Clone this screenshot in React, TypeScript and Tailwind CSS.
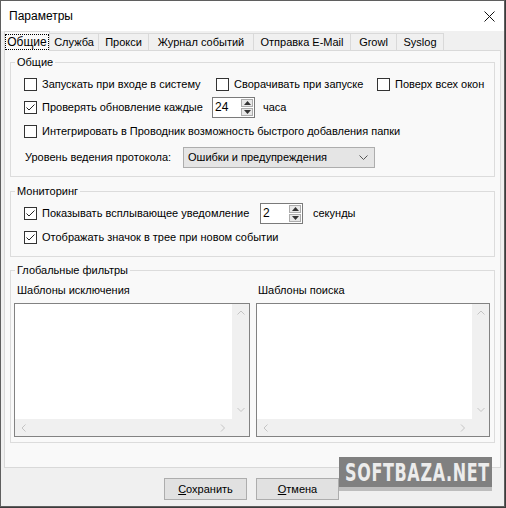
import React from "react";

function Check({ checked = false }: { checked?: boolean }) {
  return (
    <span className="flex h-[13px] w-[13px] shrink-0 items-center justify-center border border-[#333] bg-white">
      {checked ? (
        <svg width="11" height="11" viewBox="0 0 11 11">
          <polyline points="1.5,5.5 4,8 9.5,2.5" fill="none" stroke="#222" strokeWidth="1" />
        </svg>
      ) : null}
    </span>
  );
}

function CheckItem({ checked, label, className = "" }: { checked?: boolean; label: string; className?: string }) {
  return (
    <div className={`flex shrink-0 items-center gap-[5px] ${className}`}>
      <Check checked={checked} />
      <span className="whitespace-nowrap">{label}</span>
    </div>
  );
}

function Spin({ value }: { value: string }) {
  return (
    <div className="flex h-[21px] w-[43px] shrink-0 items-stretch border border-[#7a7a7a] bg-white">
      <span className="flex-1 pl-[2px] text-[12px] leading-[19px]">{value}</span>
      <div className="my-[1px] mr-[1px] flex w-[12px] flex-col gap-[1px]">
        <div className="flex flex-1 items-center justify-center border border-[#acacac] bg-[#e8e8e8]">
          <svg width="7" height="4" viewBox="0 0 7 4">
            <polygon points="0,4 3.5,0 7,4" fill="#333" />
          </svg>
        </div>
        <div className="flex flex-1 items-center justify-center border border-[#acacac] bg-[#e8e8e8]">
          <svg width="7" height="4" viewBox="0 0 7 4">
            <polygon points="0,0 3.5,4 7,0" fill="#333" />
          </svg>
        </div>
      </div>
    </div>
  );
}

function Group({ title, className = "", children }: { title: string; className?: string; children: React.ReactNode }) {
  return (
    <div className={`relative border border-[#dcdcdc] ${className}`}>
      <span className="absolute left-[4px] top-[-9px] bg-[#f9f9f9] px-[2px] leading-[16px]">{title}</span>
      {children}
    </div>
  );
}

function Chevron({ dir }: { dir: "up" | "down" | "left" | "right" }) {
  const pts = {
    up: "0.5,4.5 4,1 7.5,4.5",
    down: "0.5,1 4,4.5 7.5,1",
    left: "4.5,0.5 1,4 4.5,7.5",
    right: "1,0.5 4.5,4 1,7.5",
  }[dir];
  const vertical = dir === "up" || dir === "down";
  return (
    <svg width={vertical ? 8 : 6} height={vertical ? 6 : 8} viewBox={vertical ? "0 0 8 6" : "0 0 6 8"}>
      <polyline points={pts} fill="none" stroke="#c4c4c4" strokeWidth="1" />
    </svg>
  );
}

function ListBox() {
  return (
    <div className="flex h-[134px] flex-col border border-[#828282] bg-white">
      <div className="flex flex-1">
        <div className="flex-1 bg-white" />
        <div className="flex w-[17px] flex-col items-center justify-between bg-[#f0f0f0] py-[6px]">
          <Chevron dir="up" />
          <Chevron dir="down" />
        </div>
      </div>
      <div className="flex h-[17px]">
        <div className="flex flex-1 items-center justify-between bg-[#f0f0f0] px-[6px]">
          <Chevron dir="left" />
          <Chevron dir="right" />
        </div>
        <div className="w-[17px] bg-[#f0f0f0]" />
      </div>
    </div>
  );
}

const tabs = ["Общие", "Служба", "Прокси", "Журнал событий", "Отправка E-Mail", "Growl", "Syslog"];
const tabWidths = ["w-[46px]", "w-[49px]", "w-[50px]", "w-[105px]", "w-[97px]", "w-[46px]", "w-[47px]"];

export default function App() {
  return (
    <div className="relative h-[508px] w-[506px] overflow-hidden bg-[#3c3c3c] font-['Liberation_Sans',Arial,sans-serif] text-[11px] text-black">
      <div className="flex h-[507px] w-[505px] flex-col border border-[#5f5f5f] bg-[#f0f0f0]">
        {/* title bar */}
        <div className="flex h-[30px] shrink-0 items-center justify-between bg-white pl-[8px] pr-[9px]">
          <span className="text-[12px]">Параметры</span>
          <svg width="11" height="11" viewBox="0 0 11 11">
            <path d="M0.5 0.5 L10.5 10.5 M10.5 0.5 L0.5 10.5" stroke="#111" strokeWidth="1" />
          </svg>
        </div>

        {/* tabs */}
        <div className="flex h-[19px] items-end pl-[3px]">
          {tabs.map((t, i) =>
            i === 0 ? (
              <div
                key={t}
                className={`relative z-10 -mb-[1px] flex h-[20px] ${tabWidths[i]} items-center justify-center border border-b-0 border-[#d9d9d9] bg-[#f9f9f9] text-[12px]`}
              >
                <span className="border border-dotted border-black px-[1px] leading-[14px]">{t}</span>
              </div>
            ) : (
              <div
                key={t}
                className={`flex h-[17px] ${tabWidths[i]} items-center justify-center border border-l-0 border-b-0 border-[#d9d9d9] bg-[#f0f0f0] leading-[15px]`}
              >
                {t}
              </div>
            )
          )}
        </div>

        {/* panel */}
        <div className="ml-[3px] flex h-[418px] w-[497px] flex-col border border-[#d9d9d9] bg-[#f9f9f9] px-[5px] pt-[11px]">
          <Group title="Общие" className="h-[115px] pl-[13px] pt-[11px]">
            <div className="flex h-[20px] items-center">
              <CheckItem label="Запускать при входе в систему" className="w-[192px]" />
              <CheckItem label="Сворачивать при запуске" className="w-[161px]" />
              <CheckItem label="Поверх всех окон" />
            </div>
            <div className="mt-[3px] flex h-[21px] items-center">
              <CheckItem checked label="Проверять обновление каждые" className="w-[188px]" />
              <Spin value="24" />
              <span className="ml-[8px]">часа</span>
            </div>
            <div className="mt-[3px] flex h-[20px] items-center">
              <CheckItem label="Интегрировать в Проводник возможность быстрого добавления папки" />
            </div>
            <div className="mt-[6px] flex h-[21px] items-center pl-[1px]">
              <span className="w-[158px] shrink-0 whitespace-nowrap">Уровень ведения протокола:</span>
              <div className="flex h-[21px] w-[192px] items-center justify-between border border-[#adadad] bg-[#e5e5e5] pl-[4px] pr-[6px]">
                <span>Ошибки и предупреждения</span>
                <svg width="9" height="6" viewBox="0 0 9 6">
                  <polyline points="0.5,0.5 4.5,4.5 8.5,0.5" fill="none" stroke="#555" strokeWidth="1" />
                </svg>
              </div>
            </div>
          </Group>

          <Group title="Мониторинг" className="mt-[14px] h-[66px] pl-[13px] pt-[11px]">
            <div className="flex h-[21px] items-center">
              <CheckItem checked label="Показывать всплывающее уведомление" className="w-[236px]" />
              <Spin value="2" />
              <span className="ml-[10px]">секунды</span>
            </div>
            <div className="mt-[3px] flex h-[20px] items-center">
              <CheckItem checked label="Отображать значок в трее при новом событии" />
            </div>
          </Group>

          <Group title="Глобальные фильтры" className="mt-[13px] h-[173px] pl-[3px] pr-[5px] pt-[12px]">
            <div className="grid grid-cols-[236px_234px] gap-x-[6px]">
              <span className="pl-[3px] leading-[14px]">Шаблоны исключения</span>
              <span className="pl-[2px] leading-[14px]">Шаблоны поиска</span>
              <div className="mt-[6px]">
                <ListBox />
              </div>
              <div className="mt-[6px]">
                <ListBox />
              </div>
            </div>
          </Group>
        </div>

        {/* buttons */}
        <div className="mt-[10px] flex justify-center gap-[9px] pr-[2px]">
          <button className="h-[22px] w-[83px] border border-[#adadad] bg-[#e1e1e1]">
            <span className="underline">С</span>охранить
          </button>
          <button className="h-[22px] w-[83px] border border-[#adadad] bg-[#e1e1e1]">
            <span className="underline">О</span>тмена
          </button>
        </div>
      </div>

      {/* watermark */}
      <div className="absolute left-[339px] top-[457px] w-[153px]">
        <div className="flex h-[30px] items-center overflow-hidden bg-[#808080] pl-[6px]">
          <span className="inline-block origin-left scale-x-[0.64] whitespace-nowrap font-['DejaVu_Sans',sans-serif] text-[25px] font-bold leading-none tracking-[1px] text-[#ececec]">
            SOFTBAZA.NET
          </span>
        </div>
        <div className="h-[4px] bg-[#bdbdbd]" />
      </div>
    </div>
  );
}
